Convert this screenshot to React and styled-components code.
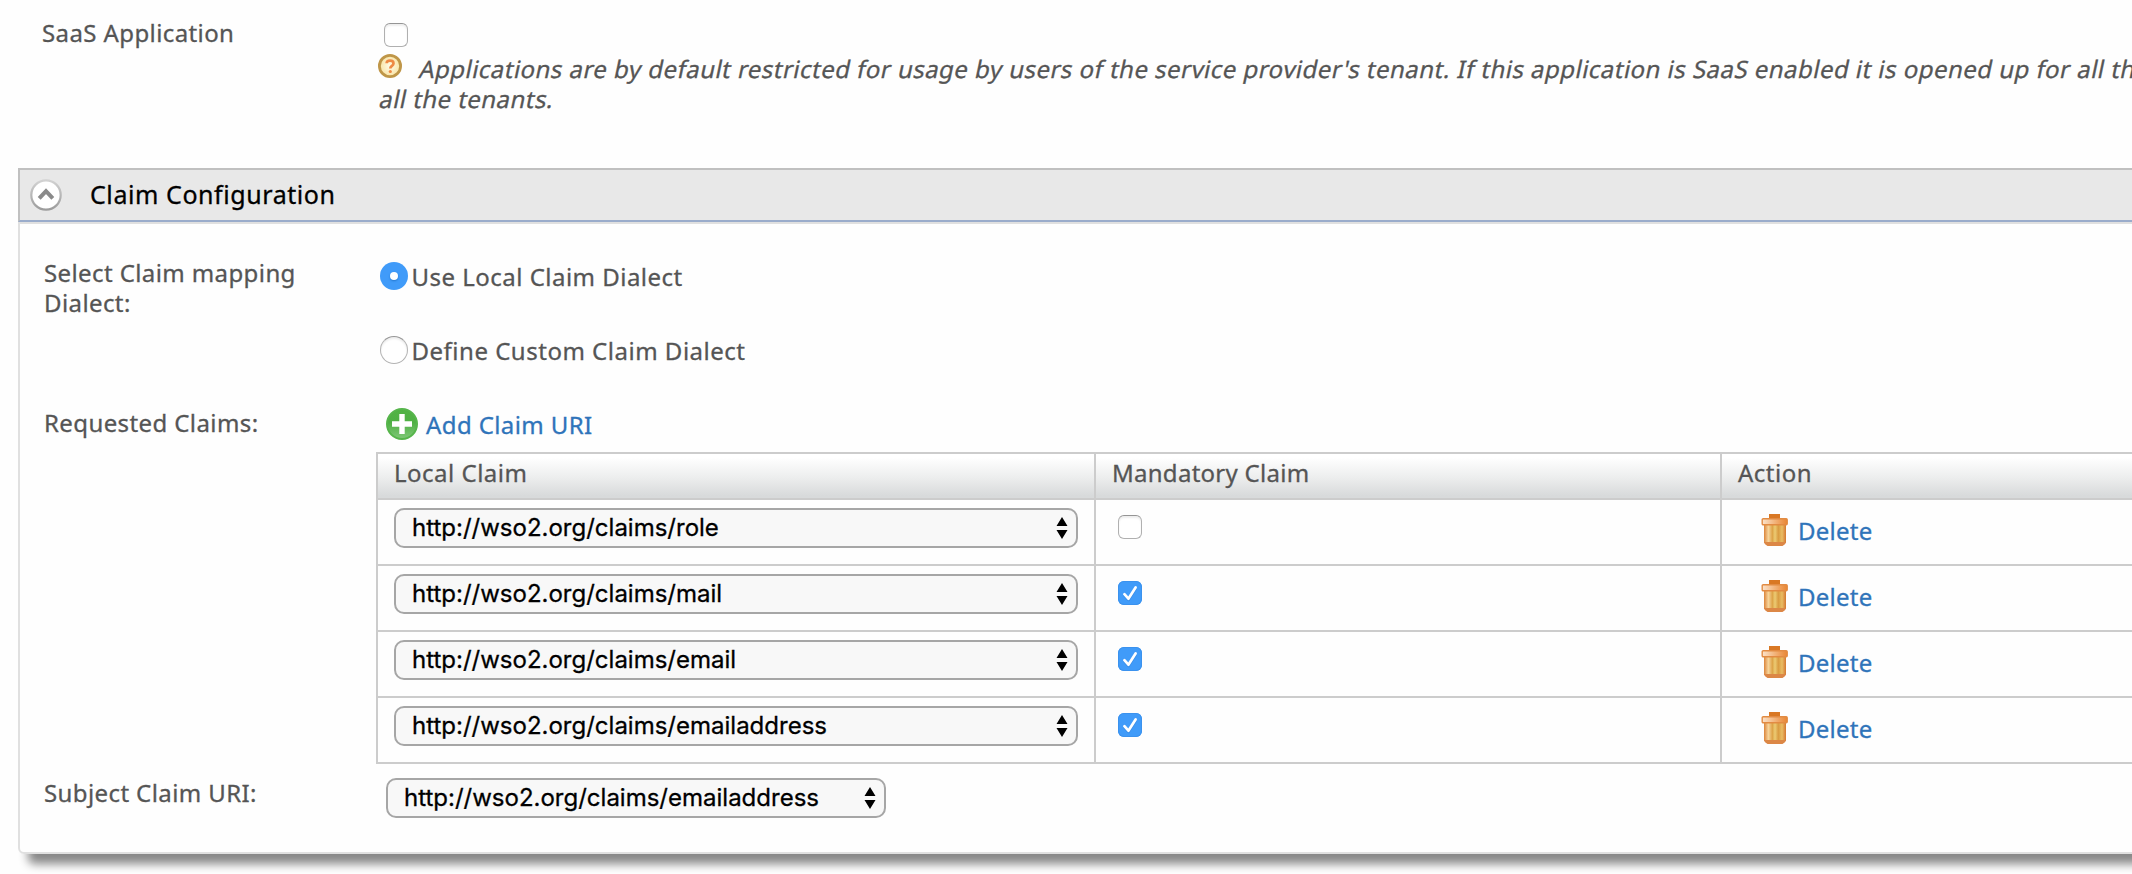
import React from "react";
import styled, { createGlobalStyle, css } from "styled-components";

const GlobalStyle = createGlobalStyle`
  html, body { margin: 0; background: #fff; overflow: hidden; }
  * { box-sizing: border-box; }
  svg { flex: none; }
`;

const Page = styled.div`
  width: 100vw;
  height: 874px;
  overflow: hidden;
  background: #fefefe;
  color: #555;
  font: 24px/30px "Noto Sans", "Open Sans", sans-serif;
`;

const Text = styled.span`
  white-space: nowrap;
  letter-spacing: ${(p) => p.$track ?? 0.4}px;
  -webkit-text-stroke: 0.3px currentColor;
`;

const HintText = styled(Text)`
  display: inline-block;
  transform: skewX(-12deg);
  transform-origin: 0 24px;
`;

const SaasSection = styled.section`
  display: grid;
  grid-template-columns: 336px 1fr;
  height: 168px;
  padding-left: 42px;
`;

const SaasLabel = styled.div`
  padding-top: 18px;
`;

const SaasContent = styled.div`
  padding-top: 23px;
  min-width: 0;
`;

const Hint = styled.div`
  margin-top: 7px;
`;

const HintLine = styled.div`
  display: flex;
  gap: 16px;
  height: 30px;
`;

const Checkbox = styled.span`
  display: flex;
  width: 24px;
  height: 24px;
  margin-left: ${(p) => p.$indent || 0}px;
  border-radius: 6px;
  ${(p) =>
    p.$checked
      ? css`
          background: #409bf9;
          box-shadow: inset 0 0 0 1px #3b92ee;
        `
      : css`
          background: #fff;
          border: 1.5px solid #b0b0b0;
          border-top-color: #959595;
          box-shadow: inset 0 2px 2px #eee;
        `}
`;

const Panel = styled.section`
  margin-left: 18px;
  width: 2200px;
  border-radius: 0 0 6px 6px;
  box-shadow: 10px 10px 10px #888;
`;

const PanelHeader = styled.header`
  display: flex;
  align-items: center;
  gap: 28px;
  height: 54px;
  padding-left: 10px;
  border: solid #c0c0c0;
  border-width: 2px 0 2px 2px;
  border-bottom-color: #9aaccb;
  background: #e8e8e8;
  color: #000;
  font-size: 25px;

  span { padding-bottom: 2px; }
`;

const PanelBody = styled.div`
  height: 632px;
  border: 2px solid #e0e0e0;
  border-radius: 0 0 6px 6px;
  background: #fefefe;
`;

const FormRow = styled.div`
  display: grid;
  grid-template-columns: 332px 1fr;
  height: ${(p) => p.$height}px;
  padding: ${(p) => p.$top || 0}px 0 0 24px;
`;

const Label = styled.div`
  display: flex;
  flex-direction: column;
`;

const RadioGroup = styled.div`
  display: flex;
  flex-direction: column;
  gap: 44px;
  padding: 4px 0 0 4px;
`;

const RadioOption = styled.label`
  display: flex;
  gap: 3.5px;
  height: 30px;
`;

const Radio = styled.span`
  display: grid;
  place-items: center;
  width: 28px;
  height: 28px;
  border-radius: 50%;
  ${(p) =>
    p.$selected
      ? css`
          background: #409bf9;
          &::after {
            content: "";
            width: 8px;
            height: 8px;
            border-radius: 50%;
            background: #fff;
            box-shadow: 0 1px 2px #2378cf;
          }
        `
      : css`
          background: #fff;
          border: 1.5px solid #b3b3b3;
          border-top-color: #969696;
          box-shadow: inset 0 2px 2px #eee;
        `}
`;

const AddLink = styled.a`
  display: flex;
  align-items: center;
  gap: 8px;
  height: 32px;
  margin: 0 0 12px 10px;
  color: #2f74ba;

  span { padding-top: 2px; }
`;

const Table = styled.div`
  width: 1900px;
  border: 2px solid #ccc;
`;

const rowGrid = css`
  display: grid;
  grid-template-columns: 718px 626px 1fr;
`;

const HeadRow = styled.div`
  ${rowGrid}
  height: 44px;
  background: linear-gradient(#fff 8%, #eceded 55%, #d8dadb 95%);
`;

const HeadCell = styled.div`
  padding: 4px 0 0 16px;
  border-right: 2px solid #ccc;
`;

const ClaimRow = styled.div`
  ${rowGrid}
  height: 66px;
  border-top: 2px solid #ccc;
`;

const Cell = styled.div`
  padding: ${(p) => p.$pad};
  border-right: 2px solid #ccc;
`;

const Select = styled.div`
  display: flex;
  align-items: center;
  justify-content: space-between;
  width: ${(p) => p.$width}px;
  height: 40px;
  margin-left: ${(p) => p.$indent || 0}px;
  padding: 0 8px 0 16px;
  border: 2px solid #a6a6a6;
  border-radius: 10px;
  background: #f8f8f8;
  color: #000;
  font-family: Inter, sans-serif;
`;

const DeleteLink = styled.a`
  display: flex;
  gap: 10px;
  height: 32px;
  color: #2f74ba;

  span { padding-top: 2px; }
`;

const Arrows = () => (
  <svg width="12" height="22" viewBox="0 0 12 22">
    <path d="M6 0 11.5 9H.5ZM6 22 .5 13h11Z" fill="#000" />
  </svg>
);

const Tick = () => (
  <svg width="24" height="24" viewBox="0 0 24 24" fill="none" strokeLinecap="round" strokeLinejoin="round">
    <path d="m6.5 14.5 4 4.5 7-11" stroke="#2e80d8" strokeWidth="2.5" opacity=".55" />
    <path d="m6.4 13.2 4 4.5 7.2-11.3" stroke="#fff" strokeWidth="2.7" />
  </svg>
);

const HelpIcon = () => (
  <svg width="24" height="24" viewBox="0 0 24 24">
    <defs>
      <radialGradient id="help">
        <stop offset="0" stopColor="#fffbe8" />
        <stop offset="1" stopColor="#f8e3a4" />
      </radialGradient>
    </defs>
    <circle cx="12" cy="12" r="10.6" fill="url(#help)" stroke="#bf9648" strokeWidth="2.8" />
    <path d="M8.6 9.300C8.700 7.400 10 6.600 12 6.600s3.500 1 3.500 2.800c0 2.400-3.200 2.600-3.200 5" fill="none" stroke="#ee8a45" strokeWidth="2.700" />
    <circle cx="12.300" cy="17.500" r="1.600" fill="#ee8a45" />
  </svg>
);

const CollapseIcon = () => (
  <svg width="32" height="32" viewBox="0 0 32 32">
    <defs>
      <linearGradient id="ring" x1="0" y1="0" x2="0" y2="1">
        <stop offset="0" stopColor="#d2d2d2" />
        <stop offset="1" stopColor="#9c9c9c" />
      </linearGradient>
    </defs>
    <circle cx="16" cy="16" r="14.7" fill="#fff" stroke="url(#ring)" strokeWidth="2.2" />
    <path d="m9.2 19.3 6.8-7.2 6.8 7.2" fill="none" stroke="#8a8a8a" strokeWidth="4" />
  </svg>
);

const AddIcon = () => (
  <svg width="32" height="32" viewBox="0 0 32 32">
    <defs>
      <linearGradient id="add" x1="0" y1="0" x2="0" y2="1">
        <stop offset="0" stopColor="#52b345" />
        <stop offset=".45" stopColor="#4fb044" />
        <stop offset="1" stopColor="#80c878" />
      </linearGradient>
    </defs>
    <circle cx="16" cy="16" r="15" fill="url(#add)" stroke="#56b54b" strokeWidth="2" />
    <path d="M16 6v20M6 16h20" stroke="#fff" strokeWidth="5.4" />
  </svg>
);

const TrashIcon = () => (
  <svg width="27" height="32" viewBox="0 0 27 32">
    <defs>
      <linearGradient id="bin">
        <stop offset="0" stopColor="#db853c" />
        <stop offset=".2" stopColor="#f7d49a" />
        <stop offset=".38" stopColor="#dda347" />
        <stop offset=".5" stopColor="#eccb73" />
        <stop offset=".65" stopColor="#d99c42" />
        <stop offset=".82" stopColor="#e9bd63" />
        <stop offset="1" stopColor="#d4772f" />
      </linearGradient>
      <linearGradient id="lid">
        <stop offset="0" stopColor="#fbe3cb" />
        <stop offset=".5" stopColor="#f2b47c" />
        <stop offset="1" stopColor="#e98532" />
      </linearGradient>
    </defs>
    <path d="M8 0h11v5H8Z" fill="#d97824" />
    <path d="M3 10h22v19H3Z" fill="url(#bin)" />
    <path d="M3 28h22l-.8 2-2.700 2H6.500l-2.700-2Z" fill="#dc8746" />
    <rect x="1.200" y="4.700" width="25" height="6" rx="1" fill="url(#lid)" stroke="#e28b43" strokeWidth="1.400" />
  </svg>
);

const claims = [
  { uri: "http://wso2.org/claims/role", mandatory: false },
  { uri: "http://wso2.org/claims/mail", mandatory: true },
  { uri: "http://wso2.org/claims/email", mandatory: true },
  { uri: "http://wso2.org/claims/emailaddress", mandatory: true },
];

const ClaimSelect = ({ uri, width, indent }) => (
  <Select $width={width} $indent={indent}>
    <Text $track={0}>{uri}</Text>
    <Arrows />
  </Select>
);

export default function App() {
  return (
    <Page>
      <GlobalStyle />
      <SaasSection>
        <SaasLabel><Text>SaaS Application</Text></SaasLabel>
        <SaasContent>
          <Checkbox $indent={6} />
          <Hint>
            <HintLine>
              <HelpIcon />
              <HintText $track={0.47}>
                Applications are by default restricted for usage by users of the service provider's tenant. If this application is SaaS enabled it is opened up for all th
              </HintText>
            </HintLine>
            <HintLine><HintText $track={0.45}>all the tenants.</HintText></HintLine>
          </Hint>
        </SaasContent>
      </SaasSection>

      <Panel>
        <PanelHeader>
          <CollapseIcon />
          <Text $track={0.57}>Claim Configuration</Text>
        </PanelHeader>
        <PanelBody>
          <FormRow $top={34} $height={184}>
            <Label>
              <Text>Select Claim mapping</Text>
              <Text>Dialect:</Text>
            </Label>
            <RadioGroup>
              <RadioOption><Radio $selected /><Text $track={0.48}>Use Local Claim Dialect</Text></RadioOption>
              <RadioOption><Radio /><Text $track={0.51}>Define Custom Claim Dialect</Text></RadioOption>
            </RadioGroup>
          </FormRow>

          <FormRow $height={370}>
            <Label><Text>Requested Claims:</Text></Label>
            <div>
              <AddLink><AddIcon /><Text>Add Claim URI</Text></AddLink>
              <Table>
                <HeadRow>
                  <HeadCell><Text $track={0.5}>Local Claim</Text></HeadCell>
                  <HeadCell><Text $track={0.27}>Mandatory Claim</Text></HeadCell>
                  <HeadCell><Text $track={0.5}>Action</Text></HeadCell>
                </HeadRow>
                {claims.map((c) => (
                  <ClaimRow key={c.uri}>
                    <Cell $pad="8px 0 0 16px"><ClaimSelect uri={c.uri} width={684} /></Cell>
                    <Cell $pad="15px 0 0 22px"><Checkbox $checked={c.mandatory}>{c.mandatory && <Tick />}</Checkbox></Cell>
                    <Cell $pad="14px 0 0 39px"><DeleteLink><TrashIcon /><Text $track={0.25}>Delete</Text></DeleteLink></Cell>
                  </ClaimRow>
                ))}
              </Table>
            </div>
          </FormRow>

          <FormRow $height={74}>
            <Label><Text>Subject Claim URI:</Text></Label>
            <ClaimSelect uri="http://wso2.org/claims/emailaddress" width={500} indent={10} />
          </FormRow>
        </PanelBody>
      </Panel>
    </Page>
  );
}
